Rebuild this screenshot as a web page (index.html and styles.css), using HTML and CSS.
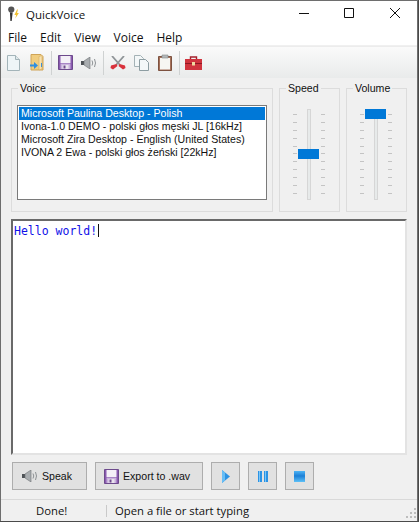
FILE: index.html
```html
<!DOCTYPE html>
<html lang="en">
<head>
  <meta charset="UTF-8">
  <meta name="viewport" content="width=device-width, initial-scale=1.0">
  <title>QuickVoice</title>
  <link rel="stylesheet" href="styles.css">
</head>
<body>

  <svg class="defs" width="0" height="0" aria-hidden="true">
    <linearGradient id="blue-fill" x1="0" y1="0" x2="0" y2="1">
      <stop offset="0" stop-color="#4db4f5"/>
      <stop offset=".45" stop-color="#1c7fd6"/>
      <stop offset="1" stop-color="#5cc0f7"/>
    </linearGradient>
    <symbol id="ic-save" viewBox="0 0 15 15">
      <path d="M.5.5h14v14H.5z" fill="#8a5bb0" stroke="#6d4a8c"/>
      <path d="M2.500 1h10v7h-10z" fill="#f4f0f7"/>
      <path d="M2.500 8.500h10V14h-10z" fill="#c9b2dc"/>
      <path d="M4.500 10h6v4h-6z" fill="#e9e3ee"/>
      <path d="M5.500 10.500h2v3h-2z" fill="#6d4a8c"/>
    </symbol>
    <symbol id="ic-speaker" viewBox="0 0 16 12">
      <path d="M0 4h3v4H0z" fill="#4e5256"/>
      <path d="M3 4l6-4v12L3 8z" fill="#a9adb0" stroke="#6d7174" stroke-width=".6"/>
      <path d="M11 3.500q1.500 2.500 0 5M13.500 2q2 4 0 8" fill="none" stroke="#8d9194"/>
    </symbol>
  </svg>

  <div class="window">
    <div class="titlebar">
      <svg class="app-icon" width="13" height="16" viewBox="0 0 14 18">
        <path d="M3 7l3 .5L5 17H3.500z" fill="#333"/>
        <circle cx="4.500" cy="4" r="3.500" fill="#555"/>
        <path d="M11 4L8 10h2l-1 4 4-6h-2l1-4z" fill="#f0c030"/>
      </svg>
      <span class="app-title">QuickVoice</span>
      <div class="caption">
        <svg width="46" height="16" viewBox="0 0 46 16"><path d="M19 7.500h10" stroke="#111"/></svg>
        <svg width="46" height="16" viewBox="0 0 46 16"><path d="M18.500 2.500h9v9h-9z" fill="none" stroke="#111"/></svg>
        <svg width="45" height="16" viewBox="0 0 45 16"><path d="M18 2l10 10M28 2L18 12" stroke="#111" fill="none"/></svg>
      </div>
    </div>

    <nav class="menubar">
      <span>File</span>
      <span>Edit</span>
      <span>View</span>
      <span>Voice</span>
      <span>Help</span>
    </nav>

    <div class="toolbar">
      <span class="tool">
        <svg width="13" height="16" viewBox="0 0 13 16">
          <path d="M.5.500h8l4 4v11H.500z" fill="#eef5f7" stroke="#a3b4b9"/>
          <path d="M8.500.500v4h4" fill="#dfe8ea" stroke="#a3b4b9"/>
        </svg>
      </span>
      <span class="tool">
        <svg width="15" height="17" viewBox="0 0 15 17">
          <path d="M1 .500h10l2 2V16H1z" fill="#f0cd80" stroke="#cfa458"/>
          <path d="M9 2.500l3-1V15l-3 1z" fill="#f8e2ae" stroke="#d3ab62" stroke-width=".6"/>
          <path d="M0 10.500h4V8l4 3.500L4 15v-2.500H0z" fill="#2f8fe0"/>
          <path d="M11 9h1v4h-1z" fill="#3a8fd8"/>
        </svg>
      </span>
      <i class="tool-sep"></i>
      <span class="tool"><svg width="15" height="15"><use href="#ic-save"/></svg></span>
      <span class="tool"><svg width="16" height="12"><use href="#ic-speaker"/></svg></span>
      <i class="tool-sep"></i>
      <span class="tool">
        <svg width="16" height="14" viewBox="0 0 16 14">
          <path d="M2 0l8 9M14 0L6 9" stroke="#8f9497" stroke-width="1.800" fill="none"/>
          <path d="M6.500 8L1 9.500 .500 12 3 13.500 7.500 10zM9.500 8l5.500 1.500.5 2.500L13 13.500 8.500 10z" fill="#d9323c"/>
        </svg>
      </span>
      <span class="tool">
        <svg width="15" height="16" viewBox="0 0 15 16">
          <path d="M.5.500h6l3 3v8h-9z" fill="#f3f7f8" stroke="#a4b2b6"/>
          <path d="M5.500 4.500h6l3 3v8h-9z" fill="#f3f7f8" stroke="#8d9da2"/>
        </svg>
      </span>
      <span class="tool">
        <svg width="14" height="17" viewBox="0 0 14 17">
          <path d="M.5 2.500h13v14H.500z" fill="#a5715a" stroke="#7d5240"/>
          <path d="M2 4h10v11.500H2z" fill="#f6f6f2"/>
          <path d="M4 1h6v3H4z" fill="#b4b8ba" stroke="#85898b" stroke-width=".6"/>
        </svg>
      </span>
      <i class="tool-sep"></i>
      <span class="tool">
        <svg width="17" height="14" viewBox="0 0 17 14">
          <path d="M5.500 3V1h6v2" fill="none" stroke="#a5212c" stroke-width="1.400"/>
          <path d="M0 3h17v11H0z" fill="#d0343e"/>
          <path d="M0 7h17v1H0z" fill="#8e1a24"/>
          <path d="M7 6h3v3.500H7z" fill="#f0d9a0"/>
        </svg>
      </span>
    </div>

    <div class="top-panels">
      <fieldset class="group voice-group">
        <legend>Voice</legend>
        <ul class="voice-list">
          <li class="selected">Microsoft Paulina Desktop - Polish</li>
          <li>Ivona-1.0 DEMO - polski głos męski JL [16kHz]</li>
          <li>Microsoft Zira Desktop - English (United States)</li>
          <li>IVONA 2 Ewa - polski głos żeński [22kHz]</li>
        </ul>
      </fieldset>

      <fieldset class="group slider-group">
        <legend>Speed</legend>
        <div class="slider">
          <div class="ticks"><i></i><i></i><i></i><i></i><i></i><i></i><i></i><i></i><i></i><i></i><i></i></div>
          <div class="track"><b class="thumb thumb-mid"></b></div>
          <div class="ticks"><i></i><i></i><i></i><i></i><i></i><i></i><i></i><i></i><i></i><i></i><i></i></div>
        </div>
      </fieldset>

      <fieldset class="group slider-group">
        <legend>Volume</legend>
        <div class="slider">
          <div class="ticks"><i></i><i></i><i></i><i></i><i></i><i></i><i></i><i></i><i></i><i></i><i></i></div>
          <div class="track"><b class="thumb thumb-top"></b></div>
          <div class="ticks"><i></i><i></i><i></i><i></i><i></i><i></i><i></i><i></i><i></i><i></i><i></i></div>
        </div>
      </fieldset>
    </div>

    <div class="editor"><span class="editor-text">Hello world!</span><i class="caret"></i></div>

    <div class="actions">
      <button class="btn btn-speak" type="button">
        <svg width="16" height="12"><use href="#ic-speaker"/></svg>
        Speak
      </button>
      <button class="btn btn-export" type="button">
        <svg width="15" height="15"><use href="#ic-save"/></svg>
        Export to .wav
      </button>
      <button class="btn btn-icon" type="button" aria-label="Play">
        <svg width="8" height="13" viewBox="0 0 8 13"><path d="M0 0l8 6.500L0 13z" fill="#2c93e4"/><path d="M0 0l3 2.500v8L0 13z" fill="#67bdf5"/></svg>
      </button>
      <button class="btn btn-icon" type="button" aria-label="Pause">
        <svg width="10" height="11" viewBox="0 0 10 11"><path d="M0 0h4v11H0zM6 0h4v11H6z" fill="#2c93e4"/><path d="M1 0h1v11H1zM7 0h1v11H7z" fill="#7cc6f7"/></svg>
      </button>
      <button class="btn btn-icon" type="button" aria-label="Stop">
        <svg width="11" height="11" viewBox="0 0 11 11"><path d="M0 0h11v11H0z" fill="url(#blue-fill)"/></svg>
      </button>
    </div>

    <footer class="statusbar">
      <span class="status-left">Done!</span>
      <span class="status-right">Open a file or start typing</span>
      <svg class="grip" width="10" height="10" viewBox="0 0 10 10">
        <path d="M8 0h2v2H8zM4 4h2v2H4zM8 4h2v2H8zM0 8h2v2H0zM4 8h2v2H4zM8 8h2v2H8z" fill="#bdbdbd"/>
      </svg>
    </footer>
  </div>

</body>
</html>
```

FILE: styles.css
```css
body {
  margin: 0;
  background: #4a4a4a;
  font-family: "Open Sans", "Liberation Sans", sans-serif;
  color: #111;
}
.defs {
  display: block;
  height: 0;
}
.window {
  box-sizing: border-box;
  width: 418px;
  height: 521px;
  border-top: 1px solid #6e6e6e;
  border-left: 1px solid #6e6e6e;
  border-right: 1px solid #6e6e6e;
  background: #f0f0f0;
  display: flex;
  flex-direction: column;
  overflow: hidden;
}

/* title + menu */
.titlebar {
  box-sizing: border-box;
  height: 29px;
  padding: 0 0 3px 6px;
  background: white;
  display: flex;
  align-items: center;
  flex: none;
}
.app-icon {
  margin-right: 6px;
}
.app-title {
  font-size: 11.5px;
}
.caption {
  margin-left: auto;
  display: flex;
}
.menubar {
  height: 15px;
  background: white;
  display: flex;
  align-items: center;
  padding-left: 7px;
  gap: 13px;
  font-size: 12px;
  flex: none;
}

/* toolbar */
.toolbar {
  height: 32px;
  margin-top: 1px;
  padding-left: 1px;
  border-top: 1px solid #ececec;
  box-sizing: border-box;
  background: linear-gradient(#fafafa, #e9ebeb);
  display: flex;
  align-items: center;
  flex: none;
}
.tool {
  width: 23.5px;
  display: flex;
  justify-content: center;
}
.tool-sep {
  width: 1px;
  height: 24px;
  margin: 0 2px;
  background: #cfd2d2;
}

/* voice + sliders */
.top-panels {
  display: flex;
  gap: 6px;
  padding: 2px 10px 0;
  flex: none;
}
.group {
  margin: 0;
  box-sizing: border-box;
  height: 132px;
  border: 1px solid #dcdcdc;
  padding: 0;
  min-width: 0;
  flex: none;
}
.group legend {
  font-family: "Liberation Sans", sans-serif;
  font-size: 10.6px;
  line-height: 17px;
  padding: 0 2px;
  margin-left: 6px;
}
.voice-group {
  width: 262px;
  padding: 8px 5px 0;
}
.voice-group legend {
  margin-left: 1px;
}
.voice-list {
  list-style: none;
  margin: 0;
  box-sizing: border-box;
  height: 95px;
  padding: 1px;
  background: white;
  border: 1px solid #7a7a7a;
  font-family: "Liberation Sans", sans-serif;
  font-size: 10.6px;
  line-height: 13px;
}
.voice-list li {
  padding-left: 2px;
  white-space: nowrap;
}
.voice-list .selected {
  background: #0078d7;
  color: white;
}
.slider-group {
  width: 61px;
}
.slider {
  height: 91px;
  margin-top: 12px;
  padding-right: 1px;
  display: flex;
  justify-content: center;
  gap: 10px;
}
.ticks {
  width: 4px;
  display: flex;
  flex-direction: column;
  justify-content: space-between;
  padding: 5px 0 6px;
}
.ticks i {
  display: block;
  height: 1px;
  background: #c4c4c4;
}
.track {
  position: relative;
  width: 4px;
  background: #e7eaea;
  border: 1px solid #d6d6d6;
  box-sizing: border-box;
}
.thumb {
  position: absolute;
  left: -10px;
  width: 21px;
  height: 10px;
  background: #0078d7;
}
.thumb-mid {
  top: 39px;
}
.thumb-top {
  top: -1px;
}

/* text area */
.editor {
  box-sizing: border-box;
  height: 236px;
  margin: 7px 10px 0;
  padding: 3px 1px;
  background: white;
  border-top: 2px solid #696969;
  border-left: 2px solid #696969;
  border-right: 2px solid #e3e3e3;
  border-bottom: 2px solid #e3e3e3;
  display: flex;
  align-items: flex-start;
  flex: none;
}
.editor-text {
  font-family: "DejaVu Sans Mono", monospace;
  font-size: 11.5px;
  line-height: 14px;
  color: #1010e8;
}
.caret {
  width: 1px;
  height: 13px;
  margin-left: 1px;
  background: #111;
}

/* buttons */
.actions {
  display: flex;
  gap: 8px;
  padding: 7px 0 0 11px;
  flex: none;
}
.btn {
  box-sizing: border-box;
  height: 28px;
  border: 1px solid #adadad;
  background: #e1e1e1;
  font-family: "Liberation Sans", sans-serif;
  font-size: 10.6px;
  color: #111;
  display: flex;
  align-items: center;
  justify-content: center;
  gap: 4px;
  padding: 0;
}
.btn-speak {
  width: 75px;
  justify-content: flex-start;
  padding-left: 9px;
}
.btn-export {
  width: 108px;
  justify-content: flex-start;
  padding-left: 8px;
}
.btn-icon {
  width: 29px;
}

/* status */
.statusbar {
  position: relative;
  margin-top: 9px;
  border-top: 1px solid #d9d9d9;
  flex: 1;
  display: flex;
  align-items: center;
  font-size: 11.3px;
}
.status-left {
  width: 105px;
  box-sizing: border-box;
  padding-left: 35px;
}
.status-right {
  border-left: 1px solid #c9c9c9;
  padding-left: 8px;
  line-height: 12px;
}
.grip {
  position: absolute;
  right: 1px;
  bottom: 3px;
}
```
